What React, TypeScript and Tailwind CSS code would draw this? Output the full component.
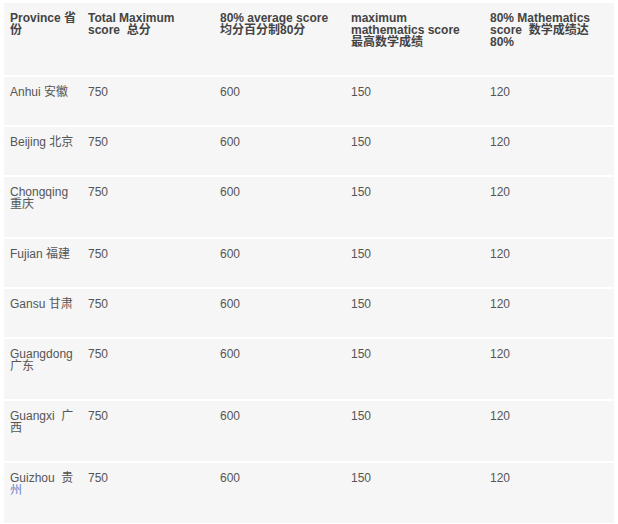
const headers: string[][] = [
  ['Province 省', '份'],
  ['Total Maximum', 'score \u00a0总分'],
  ['80% average score', '均分百分制80分'],
  ['maximum', 'mathematics score', '最高数学成绩'],
  ['80% Mathematics', 'score \u00a0数学成绩达', '80%'],
];

const rows: { name: string[]; accent?: boolean }[] = [
  { name: ['Anhui 安徽'] },
  { name: ['Beijing 北京'] },
  { name: ['Chongqing', '重庆'] },
  { name: ['Fujian 福建'] },
  { name: ['Gansu 甘肃'] },
  { name: ['Guangdong', '广东'] },
  { name: ['Guangxi \u00a0广', '西'] },
  { name: ['Guizhou \u00a0贵', '州'], accent: true },
];

const widths = ['w-[78px]', 'w-[132px]', 'w-[131px]', 'w-[139px]', 'w-[130px]'];

function Lines({ lines, accentLast }: { lines: string[]; accentLast?: boolean }) {
  return (
    <>
      {lines.map((line, i) => (
        <span
          key={i}
          className={
            'block whitespace-nowrap' +
            (accentLast && i === lines.length - 1 ? ' text-[#5a86cf]' : '')
          }
        >
          {line}
        </span>
      ))}
    </>
  );
}

export default function App() {
  return (
    <div
      className="min-h-[524px] bg-white px-[4px] pt-[1px]"
      style={{ fontFamily: '"Liberation Sans", Arial, "Noto Sans CJK SC", sans-serif' }}
    >
      <table className="w-[610px] table-fixed border-separate border-spacing-x-0 border-spacing-y-[2px] text-[12px] leading-[12px]">
        <thead>
          <tr>
            {headers.map((h, i) => (
              <th
                key={i}
                className={`${widths[i]} bg-[#f6f6f6] px-[6px] pt-[9px] pb-[27px] text-left align-top font-bold text-[#444]`}
              >
                <Lines lines={h} />
              </th>
            ))}
          </tr>
        </thead>
        <tbody>
          {rows.map((row) => (
            <tr key={row.name.join('')}>
              <td className="bg-[#f6f6f6] px-[6px] pt-[9px] pb-[27px] align-top text-[#555]">
                <Lines lines={row.name} accentLast={row.accent} />
              </td>
              <td className="bg-[#f6f6f6] px-[6px] pt-[9px] pb-[27px] align-top text-[#555]">750</td>
              <td className="bg-[#f6f6f6] px-[6px] pt-[9px] pb-[27px] align-top text-[#555]">600</td>
              <td className="bg-[#f6f6f6] px-[6px] pt-[9px] pb-[27px] align-top text-[#555]">150</td>
              <td className="bg-[#f6f6f6] px-[6px] pt-[9px] pb-[27px] align-top text-[#555]">120</td>
            </tr>
          ))}
        </tbody>
      </table>
    </div>
  );
}
